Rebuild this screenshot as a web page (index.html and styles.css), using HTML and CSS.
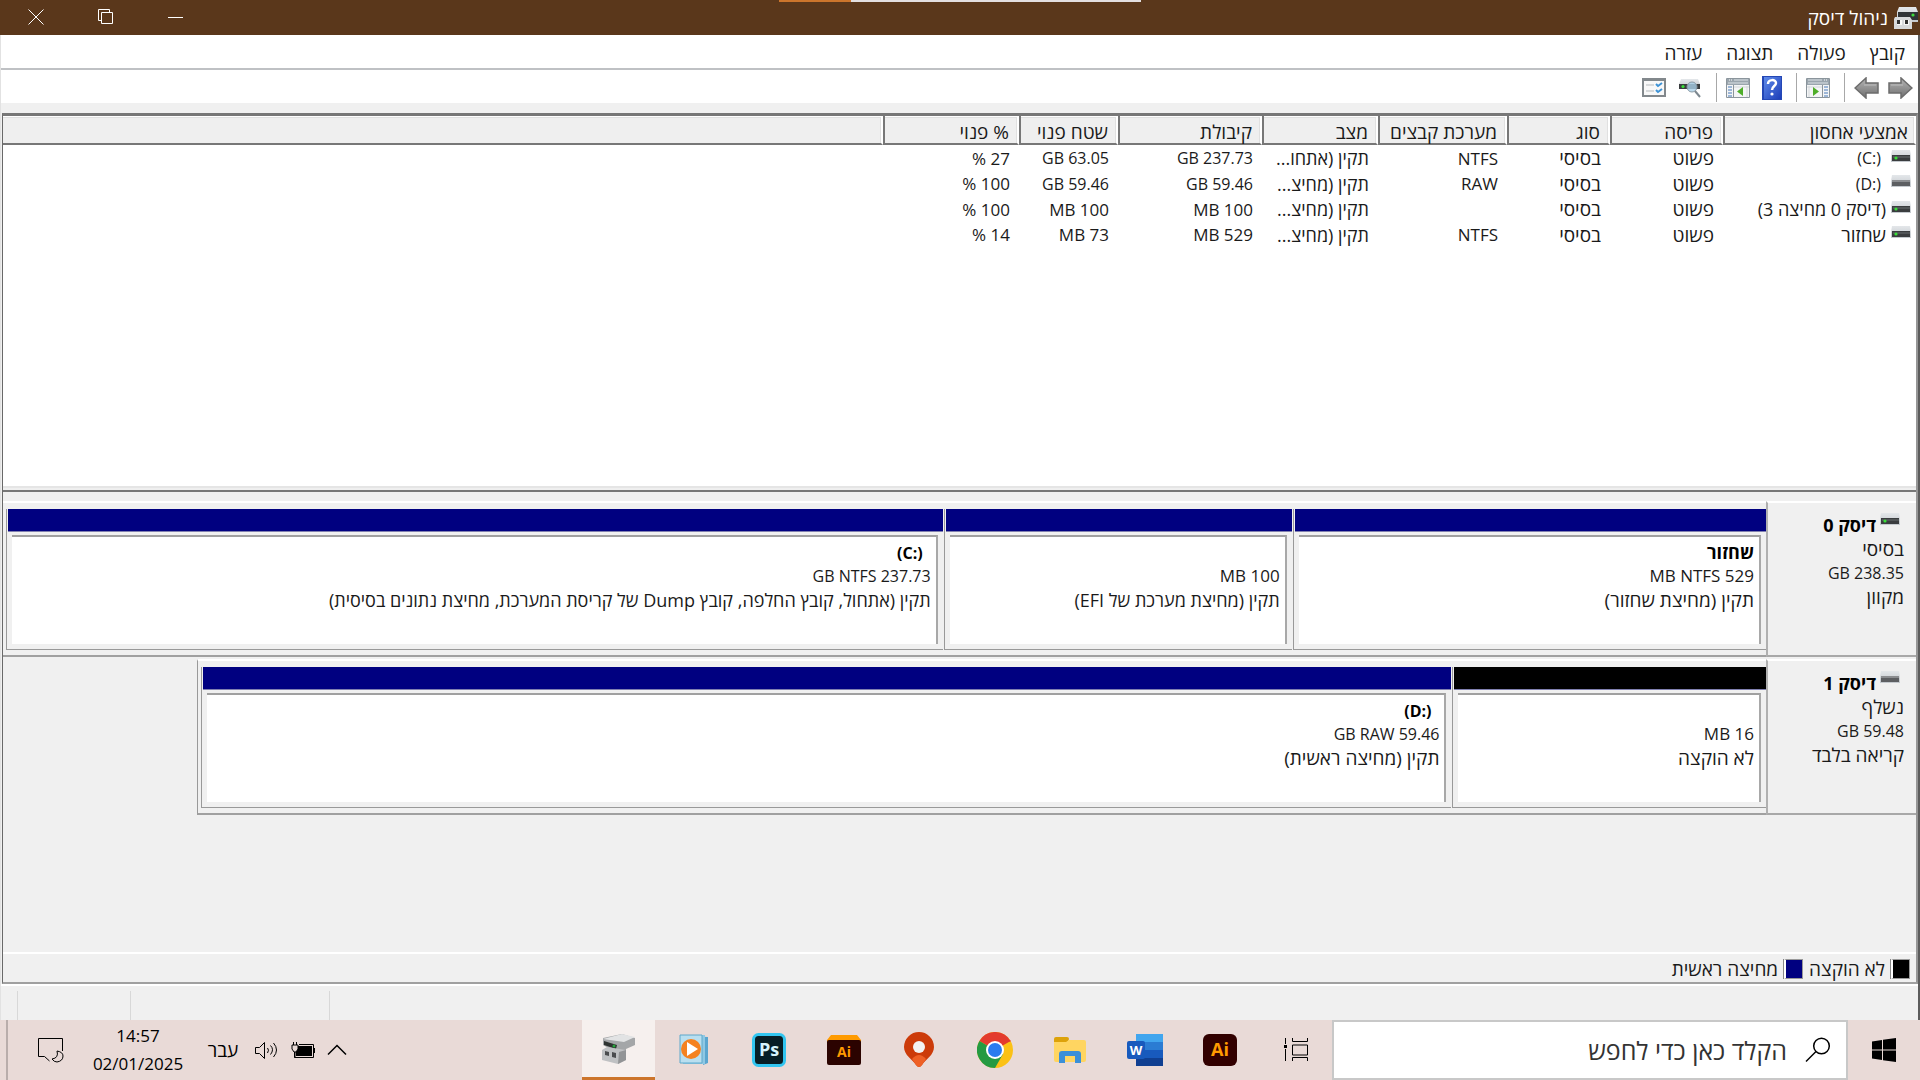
FILE: index.html
```html
<!DOCTYPE html>
<html lang="he" dir="rtl">
<head>
<meta charset="utf-8">
<title>ניהול דיסק</title>
<link rel="stylesheet" href="styles.css">
</head>
<body>
<svg class="defs" width="0" height="0" aria-hidden="true">
  <defs>
    <linearGradient id="silver" x1="0" y1="0" x2="0" y2="1"><stop offset="0" stop-color="#e4e7ea"/><stop offset="1" stop-color="#c3c8cd"/></linearGradient>
    <linearGradient id="steel" x1="0" y1="0" x2="0" y2="1"><stop offset="0" stop-color="#b5b5b5"/><stop offset="1" stop-color="#6f6f6f"/></linearGradient>
    <linearGradient id="blue" x1="0" y1="0" x2="1" y2="1"><stop offset="0" stop-color="#5f8bea"/><stop offset="1" stop-color="#1c3db8"/></linearGradient>
    <symbol id="drive" viewBox="0 0 20 13"><path d="M1 0h18l1 6v6H0V6z" fill="url(#silver)"/><path d="M1 5h18v6H1z" fill="#3a3d3f"/><path d="M2 6h17v2H2z" fill="#515557"/><circle cx="5" cy="8" r="1.6" fill="#38e038"/></symbol>
    <symbol id="drive-off" viewBox="0 0 20 13"><path d="M1 0h18l1 6v6H0V6z" fill="url(#silver)"/><path d="M1 5h18v6H1z" fill="#5d5f62"/><path d="M1 5h18v2H1z" fill="#8b8d90"/></symbol>
    <symbol id="pane" viewBox="0 0 24 20"><path d="M.5.5h23v19H.5z" fill="#f4f5f6" stroke="#8b959c"/><path d="M1 1h22v6H1z" fill="#9aa5ad"/><path d="M2 2h14M2 5h20" stroke="#dce2e6"/><path d="M18 2h1m1 0h1" stroke="#fff"/><path d="M16.500 7v12" stroke="#8b959c"/><path d="M18 9h4m-4 3h4m-4 3h4m-4 3h4" stroke="#4779b8"/><path d="M3 8v11M1 9h15" stroke="#d4d8db"/><path d="M7 9l6 4.500-6 4.500z" fill="#4fae2a"/></symbol>
    <symbol id="arrow" viewBox="0 0 25 22"><path d="M1 6h12V1l11 10-11 10v-5H1z" fill="url(#steel)" stroke="#6c6c6c" stroke-width="1.500"/><path d="M3 8h12" stroke="#bdbdbd"/></symbol>
  </defs>
</svg>
<div class="window">
  <header class="titlebar">
    <svg class="app-icon" viewBox="0 0 24 24"><path d="M5 1h17l2 5v10H3V6z" fill="url(#silver)"/><path d="M4 6h20v8H4z" fill="#303437"/><circle cx="19" cy="9" r="1.600" fill="#3ddd3d"/><path d="M1 11h15l2 3v9H0V13z" fill="#d7d9db"/><path d="M3 14h5v5H3zm7 0h5v5h-5z" fill="#f8f8f8"/><path d="M3 14h3v4H3zm8 0h3v4h-3z" fill="#333"/></svg>
    <h1>ניהול דיסק</h1>
    <div class="caption-buttons">
      <button aria-label="מזער"><svg width="16" height="16" viewBox="0 0 16 16"><path d="M0 8.500h15" stroke="#fff"/></svg></button>
      <button aria-label="שחזר"><svg width="16" height="16" viewBox="0 0 16 16" fill="none" stroke="#fff"><path d="M3.500 11.500h-3V.500h11v3M3.500 3.500h11v11h-11z"/></svg></button>
      <button aria-label="סגור"><svg width="16" height="16" viewBox="0 0 16 16"><path d="M.5.5l15 15m0-15l-15 15" stroke="#fff"/></svg></button>
    </div>
    <div class="top-progress"><span></span></div>
  </header>
  <div class="frame">
    <nav class="menubar"><button>קובץ</button><button>פעולה</button><button>תצוגה</button><button>עזרה</button></nav>
    <div class="toolbar">
      <button aria-label="קדימה"><svg width="25" height="22"><use href="#arrow"/></svg></button>
      <button aria-label="אחורה"><svg class="flip" width="25" height="22"><use href="#arrow"/></svg></button>
      <i></i>
      <button aria-label="חלונית"><svg width="24" height="20"><use href="#pane"/></svg></button>
      <i></i>
      <button aria-label="עזרה"><svg width="20" height="24" viewBox="0 0 20 24"><path d="M0 0h20v24H0z" fill="#2447b5"/><path d="M2 1h17v22H2z" fill="url(#blue)"/><path d="M6 8c0-5 8-5 8-1 0 3-4 3-4 7" fill="none" stroke="#fff" stroke-width="2.500"/><circle cx="10" cy="18" r="1.600" fill="#fff"/></svg></button>
      <button aria-label="חלונית פעולות"><svg class="flip" width="24" height="20"><use href="#pane"/></svg></button>
      <i></i>
      <button aria-label="סריקה"><svg width="24" height="20" viewBox="0 0 24 20"><path d="M3 1h17l2 5v5H1V6z" fill="url(#silver)"/><path d="M1 6h21v5H1z" fill="#3a3d3f"/><circle cx="5" cy="8.500" r="1.600" fill="#38e038"/><circle cx="14" cy="9" r="5" fill="#a9cfe9" fill-opacity=".8" stroke="#8a9aa5"/><path d="M17 13l5 6" stroke="#7d8890" stroke-width="2"/></svg></button>
      <button aria-label="מאפיינים"><svg width="24" height="19" viewBox="0 0 24 19"><path d="M1 1h22v17H1z" fill="#f8f8f8" stroke="#82888c" stroke-width="2"/><path d="M1 1.500h22" stroke="#82888c" stroke-width="3"/><path d="M4 7h8m-8 6h8" stroke="#b5b9bc"/><path d="M14 6l2 2 4-3M14 12l2 2 4-3" fill="none" stroke="#3e93d6" stroke-width="2"/></svg></button>
    </div>
    <div class="strip"></div>
    <main class="client">
      <section class="volumes">
        <table>
          <colgroup><col class="c-name"><col class="c-layout"><col class="c-type"><col class="c-fs"><col class="c-state"><col class="c-size"><col class="c-free"><col class="c-percent"><col></colgroup>
          <thead><tr><th>אמצעי אחסון</th><th>פריסה</th><th>סוג</th><th>מערכת קבצים</th><th>מצב</th><th>קיבולת</th><th>שטח פנוי</th><th>% פנוי</th><th></th></tr></thead>
          <tbody>
            <tr><td><svg><use href="#drive"/></svg><bdi class="letter" dir="ltr">(C:)</bdi></td><td>פשוט</td><td>בסיסי</td><td class="code">NTFS</td><td class="mixed">תקין (אתחו...</td><td class="num">237.73 GB</td><td class="num">63.05 GB</td><td class="code">27 %</td><td></td></tr>
            <tr><td><svg><use href="#drive-off"/></svg><bdi class="letter" dir="ltr">(D:)</bdi></td><td>פשוט</td><td>בסיסי</td><td class="code">RAW</td><td class="mixed">תקין (מחיצ...</td><td class="num">59.46 GB</td><td class="num">59.46 GB</td><td class="code">100 %</td><td></td></tr>
            <tr><td class="mixed"><svg><use href="#drive"/></svg>(דיסק 0 מחיצה 3)</td><td>פשוט</td><td>בסיסי</td><td></td><td class="mixed">תקין (מחיצ...</td><td class="code">100 MB</td><td class="code">100 MB</td><td class="code">100 %</td><td></td></tr>
            <tr><td><svg><use href="#drive"/></svg>שחזור</td><td>פשוט</td><td>בסיסי</td><td class="code">NTFS</td><td class="mixed">תקין (מחיצ...</td><td class="code">529 MB</td><td class="code">73 MB</td><td class="code">14 %</td><td></td></tr>
          </tbody>
        </table>
      </section>
      <div class="splitter"></div>
      <section class="disks">
        <article class="disk">
          <div class="disk-info"><h2><svg><use href="#drive"/></svg>דיסק 0</h2><p>בסיסי</p><p class="num">238.35 GB</p><p>מקוון</p></div>
          <div class="map" style="width:100%">
            <div class="volume" style="flex-grow:474"><div class="bar"></div><div class="box"><h3>שחזור</h3><p class="code">529 MB NTFS</p><p>תקין (מחיצת שחזור)</p></div></div>
            <div class="volume" style="flex-grow:348"><div class="bar"></div><div class="box"><h3></h3><p class="code">100 MB</p><p class="mixed">תקין (מחיצת מערכת של EFI)</p></div></div>
            <div class="volume" style="flex-grow:940"><div class="bar"></div><div class="box"><h3><bdi class="letter" dir="ltr">(C:)</bdi></h3><p class="num">237.73 GB NTFS</p><p class="mixed">תקין (אתחול, קובץ החלפה, קובץ Dump של קריסת המערכת, מחיצת נתונים בסיסית)</p></div></div>
          </div>
        </article>
        <article class="disk">
          <div class="disk-info"><h2><svg><use href="#drive-off"/></svg>דיסק 1</h2><p>נשלף</p><p class="num">59.48 GB</p><p>קריאה בלבד</p></div>
          <div class="map partial" style="width:82%">
            <div class="volume free" style="flex-grow:312"><div class="bar"></div><div class="box"><h3></h3><p class="code">16 MB</p><p>לא הוקצה</p></div></div>
            <div class="volume" style="flex-grow:1250"><div class="bar"></div><div class="box"><h3><bdi class="letter" dir="ltr">(D:)</bdi></h3><p class="num">59.46 GB RAW</p><p>תקין (מחיצה ראשית)</p></div></div>
          </div>
        </article>
      </section>
      <div class="legend"><span class="swatch black"></span><span>לא הוקצה</span><span class="swatch navy"></span><span>מחיצה ראשית</span></div>
    </main>
    <footer class="status"><span></span><span></span><span></span></footer>
  </div>
</div>
<div class="taskbar">
  <button class="start" aria-label="התחל"><svg width="24" height="24" viewBox="0 0 24 24"><path d="M0 3.500L10 2v9.500H0zM11 1.800L24 0v11.500H11zM0 12.500h10V22L0 20.500zM11 12.500h13V24l-13-1.800z"/></svg></button>
  <label class="search"><svg width="26" height="26" viewBox="0 0 26 26" fill="none" stroke="#000" stroke-width="1.500"><circle cx="16.500" cy="9" r="7.800"/><path d="M11 14.500L1 24.500"/></svg><input type="text" placeholder="הקלד כאן כדי לחפש" aria-label="חיפוש"></label>
  <div class="apps">
    <button aria-label="תצוגת משימות"><svg width="24" height="24" viewBox="0 0 24 24" fill="none" stroke="#000"><path d="M1.500 0v6M1.500 11v12M8.500 0v3.500h15V0M8.500 7h15v10h-15zM8.500 23v-3.500h15V23"/><path d="M0 7h3v3H0z" fill="#000" stroke="none"/></svg></button>
    <button aria-label="Illustrator"><svg width="34" height="34" viewBox="0 0 34 34"><rect y="1" width="34" height="32" rx="6" fill="#320000"/><text x="17" y="23" class="logo ai">Ai</text></svg></button>
    <button aria-label="Word"><svg width="36" height="34" viewBox="0 0 36 34"><path d="M9 1h27v8H9z" fill="#41a5ee"/><path d="M9 9h27v8H9z" fill="#2b7cd3"/><path d="M9 17h27v8H9z" fill="#185abd"/><path d="M9 25h27v8H9z" fill="#103f91"/><rect y="8" width="18" height="18" rx="2" fill="#185abd"/><text x="9" y="22" class="logo word">W</text></svg></button>
    <button aria-label="סייר הקבצים"><svg width="34" height="34" viewBox="0 0 34 34"><path d="M1 6q0-2 2-2h11q2 0 2 2-1 4-4 4v3H1z" fill="#dda20a"/><path d="M1 9h12l3-2h15q2 0 2 2v18q0 2-2 2H3q-2 0-2-2z" fill="#ffd561"/><path d="M6 30V21q0-3 3-3h16q3 0 3 3v9h-6v-7H12v7z" fill="#3b8fd8"/></svg></button>
    <button aria-label="Chrome"><svg width="36" height="36" viewBox="0 0 36 36"><circle cx="18" cy="18" r="18" fill="#fbc116"/><path d="M18 18L2.400 9A18 18 0 0 1 33.600 9z" fill="#e33b2e"/><path d="M2.400 9A18 18 0 0 0 18 36l8-14-8-4z" fill="#249a42"/><path d="M18 9h15.600" stroke="#e33b2e"/><circle cx="18" cy="18" r="9" fill="#fff"/><circle cx="18" cy="18" r="7" fill="#2a7bee"/></svg></button>
    <button aria-label="מפות"><svg width="32" height="36" viewBox="0 0 32 36"><path d="M16 0a15 15 0 0 1 15 15c0 8-8 12-12 18q-3 4-6 0C9 27 1 23 1 15A15 15 0 0 1 16 0z" fill="#cc3b0a"/><path d="M9 27q7-8 14 0-2 3-4 6-3 4-6 0z" fill="#ee6026"/><circle cx="16" cy="15" r="6" fill="#f3f3f3"/></svg></button>
    <button aria-label="Illustrator קבצים"><svg width="34" height="30" viewBox="0 0 34 30"><path d="M4 0h26l4 5v5H0V5z" fill="#ff9a00"/><rect y="5" width="34" height="25" rx="2" fill="#2b0300"/><text x="17" y="22" class="logo ai small">Ai</text></svg></button>
    <button aria-label="Photoshop"><svg width="34" height="34" viewBox="0 0 34 34"><rect x="1.500" y="1.500" width="31" height="31" rx="5" fill="#061e26" stroke="#31c5f0" stroke-width="3"/><text x="17" y="23" class="logo ps">Ps</text></svg></button>
    <button aria-label="Media Player"><svg width="30" height="32" viewBox="0 0 30 32"><path d="M5 2l24 1v26l-5 2V4z" fill="#5ba6cf"/><path d="M4 1h22v29H4z" fill="#8fc8e4"/><path d="M1 1h22v28H1z" fill="#b9dff0" stroke="#5fa8ca"/><circle cx="12" cy="15" r="10" fill="#f58220"/><path d="M8 8l11 7-11 7z" fill="#fff"/></svg></button>
    <button class="active" aria-label="ניהול דיסק"><svg width="34" height="32" viewBox="0 0 34 32"><path d="M1 5L20 1l13 4v7l-9 4v6l-12-4L1 12z" fill="#a4a6a8"/><path d="M1 6L20 1l13 3-11 5z" fill="#e2e3e4"/><path d="M2 8l13 4-1 4-12-4z" fill="#2f3331"/><circle cx="12" cy="13" r="1.500" fill="#25a53c"/><path d="M0 17l5-3 19 3v10l-8 4-16-4z" fill="#bfc1c3"/><path d="M17 19l7-2v10l-8 4z" fill="#929496"/><path d="M3 18l4 1v4l-4-1zm7 1l4 1v5l-4-1z" fill="#4a4c4e"/></svg></button>
  </div>
  <div class="tray">
    <button aria-label="הצג סמלים מוסתרים"><svg width="20" height="12" viewBox="0 0 20 12" fill="none" stroke="#000" stroke-width="1.500"><path d="M1 10.500l9-9 9 9"/></svg></button>
    <button aria-label="סוללה"><svg width="24" height="16" viewBox="0 0 24 16"><path d="M3.500 8v7.500h19v-13H8" fill="none" stroke="#000"/><path d="M5 4h16v10H5zM23 6h1v5h-1z"/><path d="M1 3h6v4l-2 3H3L1 7z" fill="#e9dad7" stroke="#000"/><path d="M2.500 0v3m3-3v3M4 10v6" stroke="#000"/></svg></button>
    <button aria-label="עוצמת קול"><svg width="24" height="18" viewBox="0 0 24 18" fill="none" stroke="#000"><path d="M.500 6.500h4l5-5v16l-5-5h-4zM12.500 7q2 2 0 5M15.500 4.500q4 4 0 9M18.500 2q6 7 0 14"/></svg></button>
    <button class="lang">עבר</button>
    <button class="clock"><span>14:57</span><span>02/01/2025</span></button>
    <button aria-label="הודעות"><svg width="26" height="26" viewBox="0 0 26 26" fill="none" stroke="#000"><path d="M24.500 14V1.500H.500v18h6l5 4.500"/><path d="M19 14q2 7-5 8 2 3 5 3 6-1 6-6 0-4-6-5z"/></svg></button>
    <button class="desktop" aria-label="הצג שולחן עבודה"></button>
  </div>
</div>
</body>
</html>
```
FILE: styles.css
```css
* { box-sizing: border-box; }
body { margin: 0; height: 100vh; display: flex; flex-direction: column; background: #f0f0f0; color: #1a1a1a; font: 19px/24px "Open Sans", "Noto Sans", "DejaVu Sans", sans-serif; }
button { border: 0; padding: 0; margin: 0; background: none; color: inherit; font: inherit; display: flex; align-items: center; justify-content: center; }
h1, h2, h3, p { margin: 0; }
svg { display: block; flex: none; }
.defs { position: absolute; }
.flip { transform: scaleX(-1); }
.num, .letter { font-size: 16px; }
.code { font-size: 17px; }
.mixed { font-size: 18px; }

.window { flex: 1; min-height: 0; display: flex; flex-direction: column; }
.titlebar { position: relative; flex: none; height: 35px; display: flex; align-items: center; gap: 6px; padding: 0 2px 0 1px; background: #5a371b; color: #fff; }
.titlebar h1 { font-size: 19px; font-weight: 400; }
.app-icon { width: 24px; height: 24px; }
.caption-buttons { margin-right: auto; display: flex; height: 100%; }
.caption-buttons button { width: 70px; padding-bottom: 2px; }
.top-progress { position: absolute; top: 0; left: 779px; width: 362px; height: 2px; background: #e3dfe0; direction: ltr; }
.top-progress span { display: block; width: 20%; height: 2px; background: #cc752c; }
.frame { flex: 1; min-height: 0; display: flex; flex-direction: column; border-left: 1px solid #e2e2e2; border-right: 2px solid #5c5c5c; }
.menubar { flex: none; height: 35px; display: flex; gap: 24px; padding: 2px 13px 0 0; background: #fff; border-bottom: 2px solid #bfc1c4; }
.toolbar { flex: none; height: 33px; display: flex; align-items: center; padding: 2px 5px 0 0; background: #fff; gap: 9px; }
.toolbar button { height: 31px; }
.toolbar i { width: 1px; height: 29px; background: #a8a8a8; }
.toolbar i + button { margin-right: 5px; }
.toolbar i + button + button { margin-right: 3px; }
.strip { flex: none; height: 10px; }
.client { flex: 1; min-height: 0; display: flex; flex-direction: column; margin: 0 0 0 1px; border: 1px solid #696969; border-right: 2px solid #969696; border-top: 3px solid #777; border-bottom: 2px solid #a0a0a0; }

.volumes { flex: none; height: 368px; background: #fff; }
.volumes table { width: 100%; table-layout: fixed; border-collapse: separate; border-spacing: 0; }
.c-name { width: 193px; } .c-layout { width: 113px; } .c-type { width: 103px; } .c-fs { width: 129px; }
.c-state { width: 116px; } .c-size { width: 144px; } .c-free { width: 99px; } .c-percent { width: 136px; }
.volumes th { height: 29px; padding: 4px 8px 0 0; text-align: right; font-weight: 400; line-height: 22px; background: #efefef; border-left: 2px solid #777; border-right: 2px solid #fff; border-bottom: 2px solid #777; box-shadow: inset 0 1px #fff, inset -1px 2px #e0e0e0; white-space: nowrap; }
.volumes th:first-child { padding-right: 6px; }
.volumes th:last-child { border-left: 0; }
.volumes tbody::before { content: ""; display: block; height: 1px; }
.volumes td { height: 25px; padding: 0 9px 0 0; line-height: 25px; white-space: nowrap; vertical-align: middle; }
.volumes tr:nth-child(even) td { height: 26px; line-height: 26px; }
.volumes td:first-child { display: flex; padding-right: 5px; gap: 5px; }
.volumes td svg, .disk-info svg { width: 20px; height: 13px; margin-top: 4px; }
.letter { margin-right: 5px; }
.splitter { flex: none; height: 8px; background: #efefef; border-top: 2px solid #fff; border-bottom: 2px solid #777; box-shadow: inset 0 2px #e5e5e5; }

.disks { flex: 1; min-height: 0; padding-top: 9px; }
.disk { display: flex; height: 156px; margin-bottom: 2px; }
.disk-info { flex: none; width: 150px; padding: 10px 12px 0 0; border-top: 2px solid #fff; border-bottom: 2px solid #a8a8a8; border-left: 2px solid #b0b0b0; }
.disk-info h2 { display: flex; gap: 4px; padding-right: 4px; font-size: 18px; line-height: 24px; font-weight: 700; color: #000; }
.disk-info svg { margin-top: 0; }
.map { flex: 0 1 auto; display: flex; gap: 1px; padding: 6px 0 5px 3px; border-top: 2px solid #fff; border-bottom: 2px solid #a0a0a0; }
.partial { border-left: 1px solid #999; }
.volume { flex: 1 1 0; min-width: 0; display: flex; flex-direction: column; border-left: 1px solid #999; border-bottom: 1px solid #999; padding-left: 1px; }
.bar { flex: none; height: 23px; background: #000080; border-bottom: 1px solid #8080b0; }
.free .bar { background: #000; }
.box { flex: 1; margin: 3px 5px 5px 4px; padding: 3px 5px 0 0; background: #fff; border-top: 2px solid #a0a0a0; border-right: 2px solid #a8a8a8; white-space: nowrap; overflow: hidden; }
.box h3 { height: 24px; font-size: 18px; line-height: 24px; font-weight: 700; color: #000; }
.box .letter { margin-right: 8px; }
.legend { flex: none; height: 30px; display: flex; align-items: center; gap: 6px; padding: 1px 6px 0 0; border-top: 2px solid #fff; }
.swatch { width: 19px; height: 20px; background: #000; border: 1px solid #999; border-left: 2px solid #fff; box-shadow: -1px 0 #888; }
.navy { background: #000080; }
.status { flex: none; height: 36px; display: flex; direction: ltr; padding-top: 5px; border-top: 2px solid #fff; }
.status span { border-right: 1px solid #d8d8d8; }
.status span:nth-child(1) { width: 17px; } .status span:nth-child(2) { width: 113px; } .status span:nth-child(3) { width: 199px; }

.taskbar { flex: none; height: 60px; display: flex; background: #e9dad7; color: #000; }
.start { width: 72px; flex: none; }
.search { flex: none; width: 516px; display: flex; align-items: center; gap: 18px; padding: 0 15px 0 0; background: #fff; border: 2px solid #c8c8c8; }
.search input { flex: 1; min-width: 0; border: 0; padding: 0; outline: 0; background: none; font: 25px/34px "Open Sans", "Noto Sans", sans-serif; color: #222; }
.search input::placeholder { color: #333; opacity: 1; }
.apps { flex: none; width: 750px; display: flex; justify-content: space-between; }
.apps button { width: 73px; }
.active { background: #f6f0ee; border-bottom: 3px solid #cc752c; }
.logo { font-family: "Open Sans", sans-serif; font-weight: 700; text-anchor: middle; direction: ltr; }
.ai { font-size: 18px; fill: #ff9a00; }
.small { font-size: 14px; }
.ps { font-size: 18px; fill: #d6f3fc; }
.word { font-size: 13px; fill: #fff; }
.tray { flex: 1; display: flex; justify-content: flex-end; gap: 12px; }
.clock { width: 100px; flex-direction: column; direction: ltr; font-size: 17px; line-height: 28px; }
.lang { width: 40px; }
.tray .clock { margin: 0 3px 0 12px; }
.desktop { width: 8px; margin-right: 18px; border-right: 2px solid #b9adab; }
```
